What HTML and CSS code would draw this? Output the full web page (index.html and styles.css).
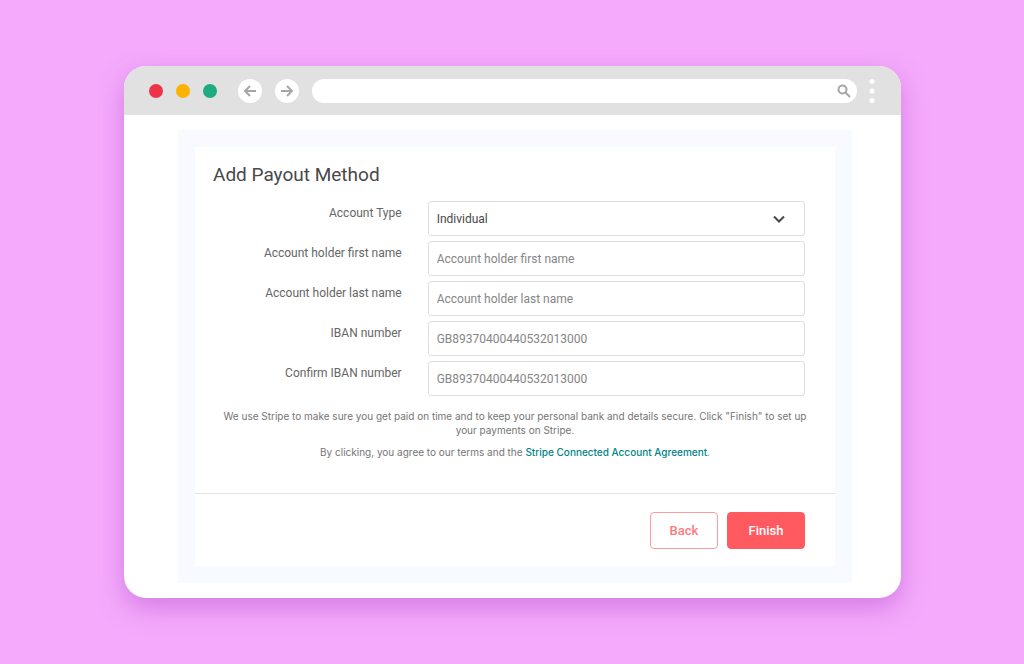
FILE: index.html
```html
<!DOCTYPE html>
<html lang="en">
<head>
    <meta charset="UTF-8">
    <meta name="viewport" content="width=device-width, initial-scale=1.0">
    <title>Add Payout Method</title>
    <link rel="stylesheet" href="styles.css">
</head>
<body>
    <div class="browser">
        <header class="toolbar">
            <div class="lights">
                <span class="light red"></span>
                <span class="light yellow"></span>
                <span class="light green"></span>
            </div>
            <div class="nav">
                <button type="button" class="nav-button" aria-label="Go back">
                    <svg width="14" height="14" viewBox="0 0 14 14"><path d="M13 7H2M7 2L2 7l5 5"/></svg>
                </button>
                <button type="button" class="nav-button" aria-label="Go forward">
                    <svg width="14" height="14" viewBox="0 0 14 14"><path d="M1 7h11M7 2l5 5-5 5"/></svg>
                </button>
            </div>
            <div class="address">
                <input type="text" class="address-input" aria-label="Address">
                <svg width="14" height="14" viewBox="0 0 14 14"><circle cx="5.5" cy="5.5" r="4"/><path d="M8.5 8.5l4.5 4.5"/></svg>
            </div>
            <button type="button" class="menu" aria-label="Menu">
                <svg width="6" height="26" viewBox="0 0 6 26"><circle cx="3" cy="3.5" r="2.5"/><circle cx="3" cy="13" r="2.5"/><circle cx="3" cy="22.5" r="2.5"/></svg>
            </button>
        </header>

        <main class="page">
            <form class="card">
                <div class="card-body">
                    <h1>Add Payout Method</h1>
                    <div class="row">
                        <label for="account-type">Account Type</label>
                        <div class="select">
                            <select id="account-type">
                                <option>Individual</option>
                                <option>Company</option>
                            </select>
                            <svg class="chevron" width="12" height="8" viewBox="0 0 12 8"><path d="M1 1.5L6 6.5l5-5"/></svg>
                        </div>
                    </div>
                    <div class="row">
                        <label for="first-name">Account holder first name</label>
                        <input type="text" id="first-name" placeholder="Account holder first name">
                    </div>
                    <div class="row">
                        <label for="last-name">Account holder last name</label>
                        <input type="text" id="last-name" placeholder="Account holder last name">
                    </div>
                    <div class="row">
                        <label for="iban">IBAN number</label>
                        <input type="text" id="iban" placeholder="GB89370400440532013000">
                    </div>
                    <div class="row">
                        <label for="iban-confirm">Confirm IBAN number</label>
                        <input type="text" id="iban-confirm" placeholder="GB89370400440532013000">
                    </div>
                    <div class="notes">
                        <p>We use Stripe to make sure you get paid on time and to keep your personal bank and details secure. Click "Finish" to set up your payments on Stripe.</p>
                        <p>By clicking, you agree to our terms and the <a href="#">Stripe Connected Account Agreement</a>.</p>
                    </div>
                </div>
                <footer class="actions">
                    <button type="button" class="btn btn-back">Back</button>
                    <button type="submit" class="btn btn-finish">Finish</button>
                </footer>
            </form>
        </main>
    </div>
</body>
</html>
```
FILE: styles.css
```css
* {
    box-sizing: border-box;
}
body {
    margin: 0;
    padding: 66px 123px 66px 124px;
    background-color: #f5aafc;
    font-family: Roboto, "Liberation Sans", sans-serif;
    font-size: 12px;
    color: #484848;
}
button, input, select {
    font: inherit;
    margin: 0;
}
button {
    cursor: pointer;
}
svg {
    display: block;
    fill: none;
    stroke: #a6a6a6;
    stroke-width: 2;
}

.browser {
    background-color: #fff;
    border-radius: 22px;
    overflow: hidden;
    box-shadow: 0 10px 24px rgba(180, 80, 205, 0.5);
}
.toolbar {
    display: flex;
    align-items: center;
    height: 49px;
    padding: 0 26px 0 25px;
    background-color: #e1e1e1;
}
.lights {
    display: flex;
    gap: 13px;
    margin-right: 21px;
}
.light {
    width: 14px;
    height: 14px;
    border-radius: 50%;
}
.red {
    background-color: #ec3349;
}
.yellow {
    background-color: #feb200;
}
.green {
    background-color: #1eab80;
}
.nav {
    display: flex;
    gap: 13px;
    margin-right: 13px;
}
.nav-button {
    display: flex;
    align-items: center;
    justify-content: center;
    width: 24px;
    height: 24px;
    padding: 0;
    border: 0;
    border-radius: 50%;
    background-color: #fff;
}
.address {
    display: flex;
    flex: 1;
    align-items: center;
    height: 24px;
    padding: 0 6px 0 12px;
    border-radius: 12px;
    background-color: #fff;
}
.address-input {
    flex: 1;
    min-width: 0;
    padding: 0;
    border: 0;
    outline: 0;
    background: none;
}
.menu {
    margin-left: 12px;
    padding: 0;
    border: 0;
    background: none;
}
.menu svg {
    fill: #fff;
    stroke: none;
}

.page {
    margin: 15px 49px 15px 54px;
    padding: 17px;
    background-color: #f7faff;
}
.card {
    background-color: #fff;
}
.card-body {
    padding: 16px 30px 26px 18px;
}
h1 {
    margin: 0 0 14px;
    font-size: 19px;
    font-weight: 400;
    line-height: 24px;
}
.row {
    display: grid;
    grid-template-columns: 1fr 2fr;
    gap: 26px;
    margin-bottom: 5px;
}
.row label {
    padding-top: 3px;
    line-height: 18px;
    text-align: right;
    color: #666;
}
.row input, .row select {
    width: 100%;
    height: 35px;
    padding: 0 8px;
    border: 1px solid #dedede;
    border-radius: 3px;
    background-color: #fff;
    color: #484848;
}
.row input::placeholder {
    color: #858585;
}
.select {
    display: grid;
    align-items: center;
}
.select select, .chevron {
    grid-area: 1 / 1;
}
.row select {
    appearance: none;
}
.chevron {
    justify-self: end;
    margin-right: 20px;
    stroke: #484848;
    pointer-events: none;
}
.notes {
    margin: 0 -6px 0 6px;
    padding-top: 8px;
    font-family: Inter, "Liberation Sans", sans-serif;
    font-size: 10px;
    line-height: 14px;
    text-align: center;
    color: #757575;
}
.notes p {
    margin: 0 0 8px;
}
.notes a {
    color: #008489;
    font-weight: 500;
    text-decoration: none;
}
.actions {
    display: flex;
    justify-content: flex-end;
    gap: 9px;
    padding: 18px 30px 17px;
    border-top: 1px solid #e2e2e2;
}
.btn {
    height: 37px;
    min-width: 68px;
    padding: 0 12px;
    border: 1px solid #ff5a5f;
    border-radius: 4px;
    font-size: 13px;
    font-weight: 500;
}
.btn-back {
    border-color: #ff9b9e;
    background-color: #fff;
    color: #ff7a7e;
}
.btn-finish {
    min-width: 78px;
    background-color: #ff5a5f;
    color: #fff;
}
```
